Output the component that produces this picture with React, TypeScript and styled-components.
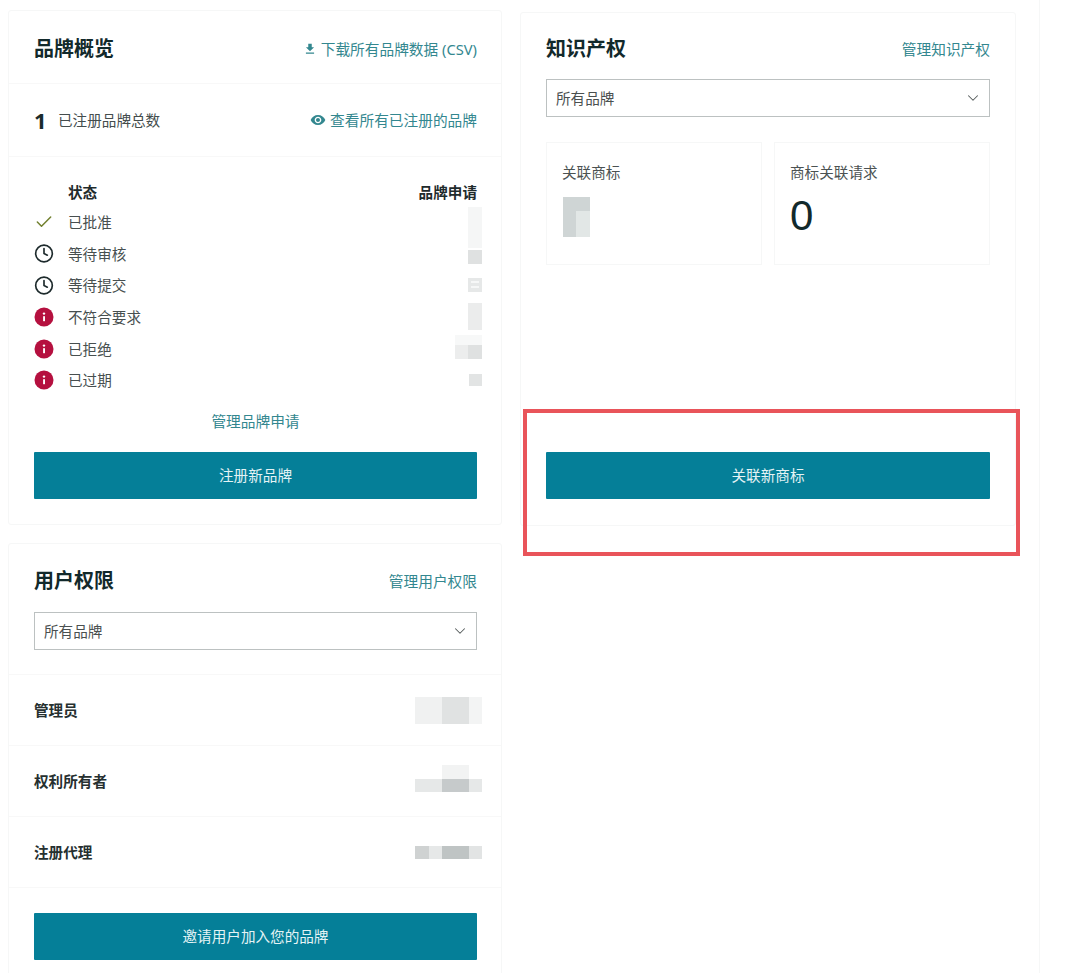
import React from 'react'
import styled, { createGlobalStyle } from 'styled-components'
import { Check, ChevronDown, Clock } from 'lucide-react'
import { MdFileDownload, MdRemoveRedEye } from 'react-icons/md'

const GlobalStyle = createGlobalStyle`
  html, body {
    margin: 0;
    height: 973px;
    overflow: hidden;
    background: #fff;
  }
  body {
    font-family: "Noto Sans", "Noto Sans CJK SC", sans-serif;
    color: #3a4444;
  }
`

const Page = styled.div`
  position: relative;
  box-sizing: border-box;
  display: flex;
  align-items: flex-start;
  gap: 18px;
  width: 1040px;
  height: 973px;
  padding: 10px 0 0 8px;
  overflow: hidden;
  border-right: 1px solid #f6f7f7;
`

const LeftColumn = styled.div`
  display: flex;
  flex-direction: column;
  gap: 18px;
  width: 494px;
`

const Card = styled.section`
  box-sizing: border-box;
  border: 1px solid #f6f7f7;
  border-radius: 3px;
  background: #fff;
`

const IpCard = styled(Card)`
  display: flex;
  flex-direction: column;
  width: 496px;
  height: 514px;
  margin-top: 2px;
  padding: 0 25px 26px;
`

const Header = styled.div<{ $height: number }>`
  display: flex;
  align-items: center;
  justify-content: space-between;
  box-sizing: border-box;
  height: ${p => p.$height}px;
  padding-top: 6px;
`

const OverviewHeader = styled(Header)`
  padding: 4px 24px 0 25px;
`

const Title = styled.h2`
  margin: 0;
  font-size: 20px;
  line-height: 28px;
  font-weight: 700;
  color: #12292b;
`

const TextLink = styled.a`
  display: inline-flex;
  align-items: center;
  gap: 4px;
  font-size: 14.7px;
  line-height: 22px;
  color: #33878f;
  svg {
    flex: none;
  }
`

const CountRow = styled.div`
  display: flex;
  align-items: center;
  height: 73px;
  padding: 0 24px 0 25px;
  border-top: 1px solid #f8f8f8;
  box-sizing: border-box;
`

const CountValue = styled.strong`
  width: 24px;
  font-size: 22px;
  line-height: 28px;
  font-weight: 700;
  color: #1a2b2c;
`

const CountLabel = styled.span`
  flex: 1;
  font-size: 14.6px;
  line-height: 22px;
  color: #444d4d;
`

const StatusSection = styled.div`
  padding: 21px 24px 25px 25px;
  border-top: 1px solid #f8f8f8;
`

const StatusHeading = styled.div`
  display: flex;
  justify-content: space-between;
  height: 28px;
  padding-left: 34px;
  font-size: 14.6px;
  line-height: 28px;
  font-weight: 700;
  color: #1f2b2c;
`

const StatusRow = styled.div`
  display: flex;
  align-items: center;
  height: 31.7px;
`

const StatusIcon = styled.span`
  display: flex;
  align-items: center;
  justify-content: center;
  width: 20px;
  margin-right: 14px;
`

const StatusLabel = styled.span`
  flex: 1;
  font-size: 14.6px;
  line-height: 22px;
  color: #474f4f;
`

const Mosaic = styled.svg<{ $shift: number }>`
  flex: none;
  margin-top: ${p => p.$shift}px;
  margin-right: -5px;
  overflow: visible;
  filter: blur(0.6px);
`

const ManageRow = styled.div`
  display: flex;
  justify-content: center;
  margin-top: 14px;
`

const PrimaryButton = styled.button<{ $top?: number }>`
  display: block;
  box-sizing: border-box;
  width: 100%;
  height: 47px;
  margin-top: ${p => (p.$top === undefined ? 'auto' : `${p.$top}px`)};
  padding: 0;
  border: 0;
  border-radius: 1px;
  background: #057f98;
  color: #e4f3f5;
  font-family: inherit;
  font-size: 14.6px;
  line-height: 47px;
`

const PermissionTop = styled.div`
  padding: 0 24px 24px 25px;
`

const SelectBox = styled.div`
  display: flex;
  align-items: center;
  justify-content: space-between;
  box-sizing: border-box;
  height: 38px;
  padding: 0 7px 0 9px;
  border: 1px solid #bcc1c1;
  font-size: 14.6px;
  line-height: 22px;
  color: #4a5050;
  svg {
    color: #555b5b;
  }
`

const RoleRow = styled.div`
  display: flex;
  align-items: center;
  justify-content: space-between;
  box-sizing: border-box;
  height: 71px;
  padding: 0 24px 0 25px;
  border-top: 1px solid #f8f8f8;
`

const RoleName = styled.span`
  font-size: 14.6px;
  line-height: 22px;
  font-weight: 700;
  color: #263030;
`

const InviteSection = styled.div`
  padding: 25px 24px 30px 25px;
  border-top: 1px solid #f8f8f8;
`

const StatGrid = styled.div`
  display: grid;
  grid-template-columns: 216px 216px;
  justify-content: space-between;
  margin-top: 25px;
`

const StatCard = styled.div`
  box-sizing: border-box;
  height: 123px;
  padding: 18px 16px 18px 15px;
  border: 1px solid #f6f7f7;
`

const StatLabel = styled.div`
  font-size: 14.6px;
  line-height: 22px;
  color: #4b5252;
`

const StatValue = styled.div`
  margin-top: 10px;
  font-family: "Liberation Sans", sans-serif;
  font-size: 42px;
  line-height: 46px;
  color: #12292b;
`

const StatMosaic = styled.svg`
  display: block;
  margin-top: 14px;
  margin-left: 1px;
  filter: blur(0.4px);
`

const Highlight = styled.div`
  position: absolute;
  left: 523px;
  top: 409px;
  box-sizing: border-box;
  width: 497px;
  height: 147px;
  border: 4px solid #e9545a;
`

// x, y, w, h, colour
type Cell = [number, number, number, number, string]

const Blocks = ({ width, height, shift = 0, cells }: { width: number; height: number; shift?: number; cells: Cell[] }) => (
  <Mosaic $shift={shift} width={width} height={height} viewBox={`0 0 ${width} ${height}`}>
    {cells.map(([x, y, w, h, fill], i) => (
      <rect key={i} x={x} y={y} width={w} height={h} fill={fill} />
    ))}
  </Mosaic>
)

const InfoIcon = () => (
  <svg width="20" height="20" viewBox="0 0 20 20">
    <circle cx="10" cy="10" r="9.5" fill="#b5103f" />
    <rect x="9.1" y="9.2" width="1.9" height="5" fill="#fff" />
    <circle cx="10" cy="6.6" r="1.2" fill="#fff" />
  </svg>
)

const statusRows: { label: string; icon: React.ReactNode; mosaic: React.ReactNode }[] = [
  {
    label: '已批准',
    icon: <Check size={20} color="#72802f" strokeWidth={1.8} />,
    mosaic: <Blocks width={14} height={41} shift={11} cells={[[0, 0, 14, 41, '#f5f6f6']]} />,
  },
  {
    label: '等待审核',
    icon: <Clock size={21} color="#1d2a2c" strokeWidth={2} />,
    mosaic: <Blocks width={14} height={14} shift={6} cells={[[0, 0, 14, 14, '#dfe1e1']]} />,
  },
  {
    label: '等待提交',
    icon: <Clock size={21} color="#1d2a2c" strokeWidth={2} />,
    mosaic: <Blocks width={14} height={14} cells={[[0, 0, 14, 14, '#e6e8e8'], [3, 3, 8, 2, '#f6f7f7'], [3, 8, 8, 2, '#f6f7f7']]} />,
  },
  {
    label: '不符合要求',
    icon: <InfoIcon />,
    mosaic: <Blocks width={14} height={27} cells={[[0, 0, 14, 27, '#ebecec']]} />,
  },
  {
    label: '已拒绝',
    icon: <InfoIcon />,
    mosaic: <Blocks width={27} height={24} shift={-4} cells={[[0, 0, 27, 10, '#f7f8f8'], [0, 10, 13, 14, '#eceded'], [13, 10, 14, 14, '#dfe1e1']]} />,
  },
  {
    label: '已过期',
    icon: <InfoIcon />,
    mosaic: <Blocks width={13} height={12} cells={[[0, 0, 13, 12, '#e2e4e4']]} />,
  },
]

export default function App() {
  return (
    <>
      <GlobalStyle />
      <Page>
        <LeftColumn>
          <Card>
            <OverviewHeader $height={72}>
              <Title>品牌概览</Title>
              <TextLink>
                <MdFileDownload size={14} />
                下载所有品牌数据 (CSV)
              </TextLink>
            </OverviewHeader>
            <CountRow>
              <CountValue>1</CountValue>
              <CountLabel>已注册品牌总数</CountLabel>
              <TextLink>
                <MdRemoveRedEye size={16} />
                查看所有已注册的品牌
              </TextLink>
            </CountRow>
            <StatusSection>
              <StatusHeading>
                <span>状态</span>
                <span>品牌申请</span>
              </StatusHeading>
              {statusRows.map(row => (
                <StatusRow key={row.label}>
                  <StatusIcon>{row.icon}</StatusIcon>
                  <StatusLabel>{row.label}</StatusLabel>
                  {row.mosaic}
                </StatusRow>
              ))}
              <ManageRow>
                <TextLink>管理品牌申请</TextLink>
              </ManageRow>
              <PrimaryButton $top={20}>注册新品牌</PrimaryButton>
            </StatusSection>
          </Card>

          <Card>
            <PermissionTop>
              <Header $height={68}>
                <Title>用户权限</Title>
                <TextLink>管理用户权限</TextLink>
              </Header>
              <SelectBox>
                所有品牌
                <ChevronDown size={18} strokeWidth={1.4} />
              </SelectBox>
            </PermissionTop>
            <RoleRow>
              <RoleName>管理员</RoleName>
              <Blocks width={67} height={27} cells={[[0, 0, 27, 27, '#f0f1f1'], [27, 0, 27, 27, '#e0e2e2'], [54, 0, 13, 27, '#f3f4f4']]} />
            </RoleRow>
            <RoleRow>
              <RoleName>权利所有者</RoleName>
              <Blocks width={67} height={27} shift={-5} cells={[[27, 0, 27, 14, '#f2f3f3'], [0, 14, 27, 13, '#e6e8e8'], [27, 14, 27, 13, '#c6cacb'], [54, 14, 13, 13, '#e6e8e8']]} />
            </RoleRow>
            <RoleRow>
              <RoleName>注册代理</RoleName>
              <Blocks width={67} height={13} cells={[[0, 0, 14, 13, '#cfd2d2'], [14, 0, 13, 13, '#e6e8e8'], [27, 0, 27, 13, '#bfc4c4'], [54, 0, 13, 13, '#e2e4e4']]} />
            </RoleRow>
            <InviteSection>
              <PrimaryButton $top={0}>邀请用户加入您的品牌</PrimaryButton>
            </InviteSection>
          </Card>
        </LeftColumn>

        <IpCard>
          <Header $height={66}>
            <Title>知识产权</Title>
            <TextLink>管理知识产权</TextLink>
          </Header>
          <SelectBox>
            所有品牌
            <ChevronDown size={18} strokeWidth={1.4} />
          </SelectBox>
          <StatGrid>
            <StatCard>
              <StatLabel>关联商标</StatLabel>
              <StatMosaic width={27} height={40} viewBox="0 0 27 40">
                <rect width="27" height="40" fill="#cfd5d5" />
                <rect x="13" y="14" width="14" height="26" fill="#e2e7e6" />
              </StatMosaic>
            </StatCard>
            <StatCard>
              <StatLabel>商标关联请求</StatLabel>
              <StatValue>0</StatValue>
            </StatCard>
          </StatGrid>
          <PrimaryButton>关联新商标</PrimaryButton>
        </IpCard>

        <Highlight />
      </Page>
    </>
  )
}
